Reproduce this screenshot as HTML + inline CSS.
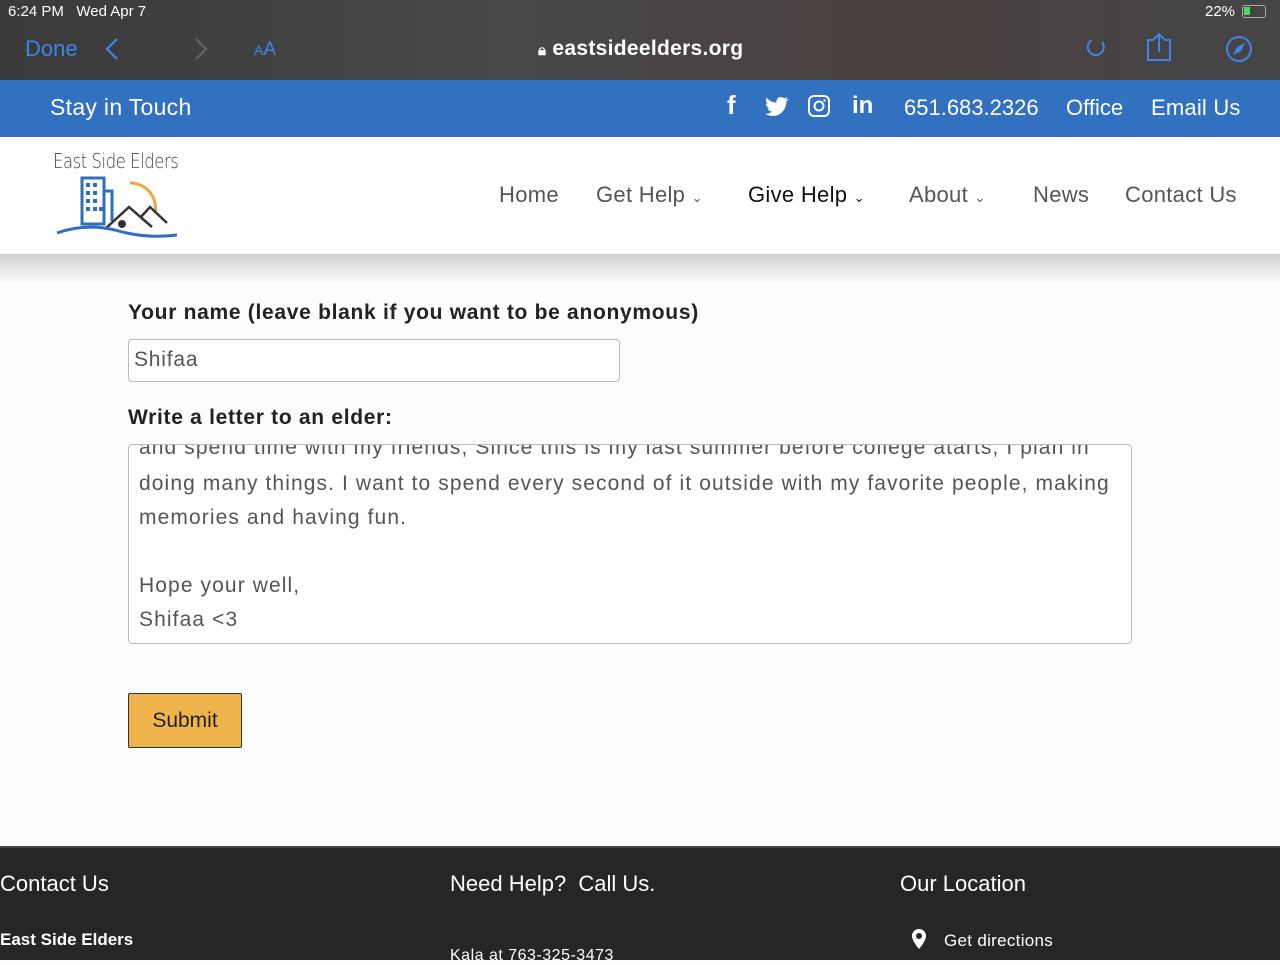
<!DOCTYPE html>
<html><head><meta charset="utf-8"><style>
*{margin:0;padding:0;box-sizing:border-box}
body{width:1280px;height:960px;overflow:hidden;font-family:"Liberation Sans",sans-serif;background:#fdfdfd;position:relative}
.abs{position:absolute;white-space:nowrap}
#top{position:absolute;left:0;top:0;width:1280px;height:80px;background:linear-gradient(90deg,#3a3a3a 0%,#484848 40%,#4a3f3f 70%,#454545 100%)}
#blue{position:absolute;left:0;top:80px;width:1280px;height:57px;background:#3270c0;color:#fff}
#hdr{position:absolute;left:0;top:137px;width:1280px;height:117px;background:#fff}
#shadow{position:absolute;left:0;top:254px;width:1280px;height:30px;background:linear-gradient(#d0d0d0,#fdfdfd)}
.nav{font-size:22px;color:#555;top:182px;letter-spacing:0.3px}
.lbl{font-weight:bold;font-size:21px;color:#222;letter-spacing:0.7px}
#foot{position:absolute;left:0;top:846px;width:1280px;height:114px;background:#262626;color:#fff;border-top:2px solid #444}
.ta{font-size:21px;color:#555;letter-spacing:1.1px}
</style></head><body>
<div id="top">
<div class="abs" style="left:8px;top:3px;color:#fff;font-size:15px">6:24 PM&nbsp;&nbsp;&nbsp;Wed Apr 7</div>
<div class="abs" style="left:1205px;top:3px;color:#fff;font-size:15px">22%</div>
<div class="abs" style="left:1242px;top:5px;width:24px;height:13px;border:1.5px solid #aaa;border-radius:3px"><div style="width:6px;height:8px;background:#4cd964;margin:1px"></div></div>
<div class="abs" style="left:25px;top:36px;color:#3d86e8;font-size:22px">Done</div>
<svg class="abs" style="left:100px;top:36px" width="120" height="28"><path d="M17 3 L7 13 L17 23" stroke="#3d86e8" stroke-width="2.2" fill="none"/><path d="M96 3 L106 13 L96 23" stroke="#666" stroke-width="2.2" fill="none"/></svg>
<div class="abs" style="left:254px;top:39px;color:#3d86e8;font-size:19px"><span style="font-size:14px">A</span>A</div>
<div class="abs" style="left:538px;top:37px;color:#fff;font-size:21px;font-weight:bold;letter-spacing:0.3px"><span style="font-size:15px">&#128274;&#xFE0E;</span> eastsideelders.org</div>
<svg class="abs" style="left:1080px;top:30px" width="180" height="36"><path d="M22 12 A8 8 0 1 1 12 10" stroke="#3d86e8" stroke-width="2" fill="none"/><path d="M74 10 h-6 v20 h22 v-20 h-6 M79 22 V4 M74 9 l5 -5 l5 5" stroke="#3d86e8" stroke-width="2" fill="none"/><circle cx="159" cy="19" r="12" stroke="#3d86e8" stroke-width="2" fill="none"/><path d="M165 13 L157 17 L153 25 L161 21Z" fill="#3d86e8"/></svg>
</div>
<div id="blue">
<div class="abs" style="left:50px;top:14px;font-size:23px;letter-spacing:0.3px">Stay in Touch</div>
<div class="abs" style="left:727px;top:10px;font-size:26px;font-weight:bold">f</div>
<svg class="abs" style="left:765px;top:16px" width="24" height="20"><path d="M23 3c-1 .4-2 .6-3 .7 1-.6 2-1.6 2.3-2.7-1 .6-2 1-3 1.2C17 1 14.5.7 13 2c-1.3 1.2-2 3-1.6 4.6C7.5 6.4 4 4.5 1.6 1.6.4 3.8 1 6.4 3 7.8c-.8 0-1.6-.3-2.2-.6 0 2.4 1.7 4.4 4 4.9-.8.2-1.6.2-2.2.1.6 2 2.5 3.4 4.6 3.4C5 17.2 2.5 18 0 17.7 2.2 19.1 4.8 20 7.5 20c9 0 14-7.6 13.8-14.5 1-.7 1.8-1.5 2.4-2.5z" fill="#fff"/></svg>
<svg class="abs" style="left:808px;top:15px" width="22" height="22"><rect x="1" y="1" width="20" height="20" rx="5" stroke="#fff" stroke-width="2" fill="none"/><circle cx="11" cy="11" r="4.5" stroke="#fff" stroke-width="2" fill="none"/><circle cx="16.5" cy="5.5" r="1.2" fill="#fff"/></svg>
<div class="abs" style="left:852px;top:12px;font-size:24px;font-weight:bold">in</div>
<div class="abs" style="left:904px;top:15px;font-size:22px">651.683.2326</div>
<div class="abs" style="left:1066px;top:15px;font-size:22px">Office</div>
<div class="abs" style="left:1151px;top:15px;font-size:22px;letter-spacing:0.2px">Email Us</div>
</div>
<div id="hdr">
<div class="abs" style="left:53px;top:12px;font-size:20px;color:#444;font-family:'DejaVu Sans',sans-serif;font-weight:200;letter-spacing:-0.5px;transform:scaleX(0.82);transform-origin:left">East Side Elders</div>
<svg class="abs" style="left:55px;top:38px" width="130" height="70"><path d="M75 8 A25 25 0 0 1 100 38" stroke="#eaa840" stroke-width="3" fill="none"/><rect x="27" y="3" width="22" height="46" stroke="#2f6fbd" stroke-width="3" fill="#fff"/><path d="M49 16 h8 v30" stroke="#2f6fbd" stroke-width="3" fill="none"/><g fill="#2f6fbd"><rect x="31" y="8" width="4" height="4"/><rect x="38" y="8" width="4" height="4"/><rect x="31" y="16" width="4" height="4"/><rect x="38" y="16" width="4" height="4"/><rect x="31" y="24" width="4" height="4"/><rect x="38" y="24" width="4" height="4"/><rect x="31" y="32" width="4" height="4"/><rect x="38" y="32" width="4" height="4"/><rect x="44" y="32" width="4" height="4"/></g><path d="M50 54 L74 32 L97 52 M85 43 L95 32 L112 48" stroke="#333" stroke-width="2.5" fill="none"/><circle cx="67" cy="49" r="4" fill="#333"/><path d="M2 58 Q30 48 60 55 Q90 64 122 60" stroke="#2f6fbd" stroke-width="3" fill="none"/></svg>
</div>
<div id="shadow"></div>
<div class="abs nav" style="left:499px">Home</div>
<div class="abs nav" style="left:596px">Get Help <span style="font-size:13px">&#8964;</span></div>
<div class="abs nav" style="left:748px;color:#111">Give Help <span style="font-size:13px">&#8964;</span></div>
<div class="abs nav" style="left:909px">About <span style="font-size:13px">&#8964;</span></div>
<div class="abs nav" style="left:1033px">News</div>
<div class="abs nav" style="left:1125px">Contact Us</div>

<div class="abs lbl" style="left:128px;top:301px">Your name (leave blank if you want to be anonymous)</div>
<div class="abs" style="left:128px;top:339px;width:492px;height:43px;border:1px solid #bbb;border-radius:4px;background:#fff"></div>
<div class="abs" style="left:134px;top:348px;font-size:21px;color:#555;letter-spacing:0.8px">Shifaa</div>
<div class="abs lbl" style="left:128px;top:406px">Write a letter to an elder:</div>
<div class="abs" style="left:128px;top:444px;width:1004px;height:200px;border:1px solid #bbb;border-radius:4px;background:#fff;overflow:hidden">
<div class="abs ta" style="left:10px;top:-9px">and spend time with my friends, Since this is my last summer before college atarts, I plan in</div>
<div class="abs ta" style="left:10px;top:27px">doing many things. I want to spend every second of it outside with my favorite people, making</div>
<div class="abs ta" style="left:10px;top:61px">memories and having fun.</div>
<div class="abs ta" style="left:10px;top:129px">Hope your well,</div>
<div class="abs ta" style="left:10px;top:163px">Shifaa &lt;3</div>
</div>
<div class="abs" style="left:128px;top:693px;width:114px;height:55px;background:#f0b44c;border:1px solid #333;border-radius:2px;font-size:21px;color:#222;text-align:center;line-height:53px">Submit</div>

<div id="foot">
<div class="abs" style="left:0;top:23px;font-size:22px">Contact Us</div>
<div class="abs" style="left:450px;top:23px;font-size:22px">Need Help?&nbsp; Call Us.</div>
<div class="abs" style="left:900px;top:23px;font-size:22px">Our Location</div>
<div class="abs" style="left:0;top:82px;font-size:17px;font-weight:bold">East Side Elders</div>
<div class="abs" style="left:450px;top:99px;font-size:16px;letter-spacing:0.5px">Kala at 763-325-3473</div>
<svg class="abs" style="left:910px;top:80px" width="18" height="24"><path d="M9 1a7 7 0 0 0-7 7c0 5 7 13 7 13s7-8 7-13a7 7 0 0 0-7-7z" fill="#fff"/><circle cx="9" cy="8" r="3" fill="#262626"/></svg>
<div class="abs" style="left:944px;top:83px;font-size:17px;letter-spacing:0.3px">Get directions</div>
</div>
</body></html>
